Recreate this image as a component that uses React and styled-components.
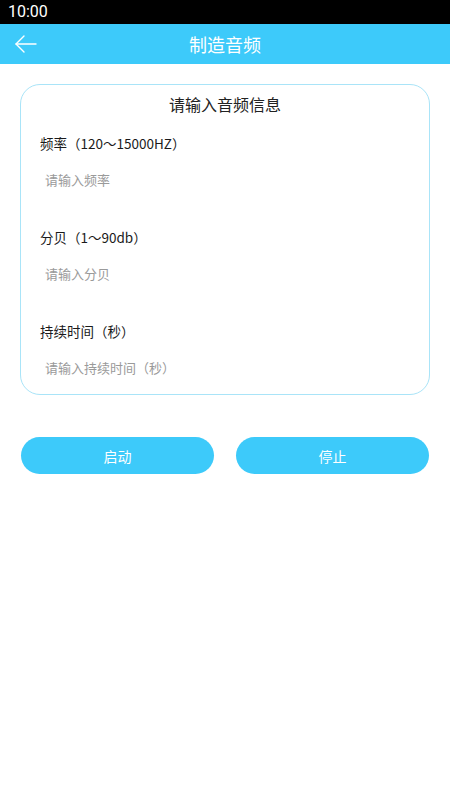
import React from 'react';
import styled, { createGlobalStyle } from 'styled-components';

const GlobalStyle = createGlobalStyle`
  html, body {
    margin: 0;
    padding: 0;
    background: #fff;
    font-family: Roboto, "Noto Sans CJK SC", sans-serif;
  }
  * { box-sizing: border-box; }
`;

const BLUE = '#3dcafa';
const CJK = '"Noto Sans CJK SC", sans-serif';

const fields = [
  { label: '频率（120～15000HZ）', placeholder: '请输入频率' },
  { label: '分贝（1～90db）', placeholder: '请输入分贝' },
  { label: '持续时间（秒）', placeholder: '请输入持续时间（秒）' }
];

const App = () => (
  <Screen>
    <GlobalStyle />
    <StatusBar>10:00</StatusBar>
    <AppBar>
      <BackButton aria-label='返回'>
        <svg width='24' height='24' viewBox='0 0 24 24' fill='none'
          stroke='#fff' strokeWidth='1.4' strokeLinecap='round' strokeLinejoin='round'>
          <path d='M22 12H2' />
          <path d='M10 4l-8 8 8 8' />
        </svg>
      </BackButton>
      <Title>制造音频</Title>
    </AppBar>

    <Content>
      <Card>
        <CardTitle>请输入音频信息</CardTitle>
        <Fields>
          {fields.map(f => (
            <Field key={f.label}>
              <Label>{f.label}</Label>
              <Input placeholder={f.placeholder} />
            </Field>
          ))}
        </Fields>
      </Card>

      <Actions>
        <ActionButton>启动</ActionButton>
        <ActionButton>停止</ActionButton>
      </Actions>
    </Content>
  </Screen>
);

const Screen = styled.div`
  width: 450px;
  min-height: 800px;
  background: #fff;
`;

const StatusBar = styled.div`
  height: 24px;
  background: #000;
  color: #fff;
  font-size: 16px;
  line-height: 24px;
  padding-left: 8px;
`;

const AppBar = styled.header`
  position: relative;
  height: 40px;
  background: ${BLUE};
  display: flex;
  align-items: center;
  justify-content: center;
`;

const BackButton = styled.button`
  position: absolute;
  left: 14px;
  top: 8px;
  padding: 0;
  border: 0;
  background: none;
  display: flex;
`;

const Title = styled.h1`
  margin: 0;
  color: #fff;
  font-size: 18px;
  font-weight: 400;
  font-family: ${CJK};
`;

const Content = styled.main`
  padding: 20px 20px 0;
`;

const Card = styled.section`
  border: 1px solid #a9e4f8;
  border-radius: 20px;
  padding: 0 19px 1px;
`;

const CardTitle = styled.h2`
  margin: 0;
  height: 39px;
  line-height: 38px;
  text-align: center;
  font-size: 16px;
  font-weight: 400;
  color: #222;
  font-family: ${CJK};
`;

const Fields = styled.div`
  display: flex;
  flex-direction: column;
  gap: 21px;
  padding-top: 8px;
`;

const Field = styled.label`
  display: flex;
  flex-direction: column;
`;

const Label = styled.span`
  line-height: 22px;
  font-size: 13.5px;
  color: #1a1a1a;
  font-family: ${CJK};
`;

const Input = styled.input`
  height: 51px;
  border: 0;
  outline: none;
  padding: 0 5px;
  font-size: 13px;
  color: #222;
  background: transparent;
  font-family: ${CJK};

  &::placeholder {
    color: #9a9a9a;
  }
`;

const Actions = styled.div`
  display: grid;
  grid-template-columns: 1fr 1fr;
  gap: 22px;
  margin-top: 42px;
  padding: 0 1px;
`;

const ActionButton = styled.button`
  height: 37px;
  border: 0;
  border-radius: 19px;
  background: ${BLUE};
  color: #fff;
  font-size: 14px;
  font-family: ${CJK};
`;

export default App;
